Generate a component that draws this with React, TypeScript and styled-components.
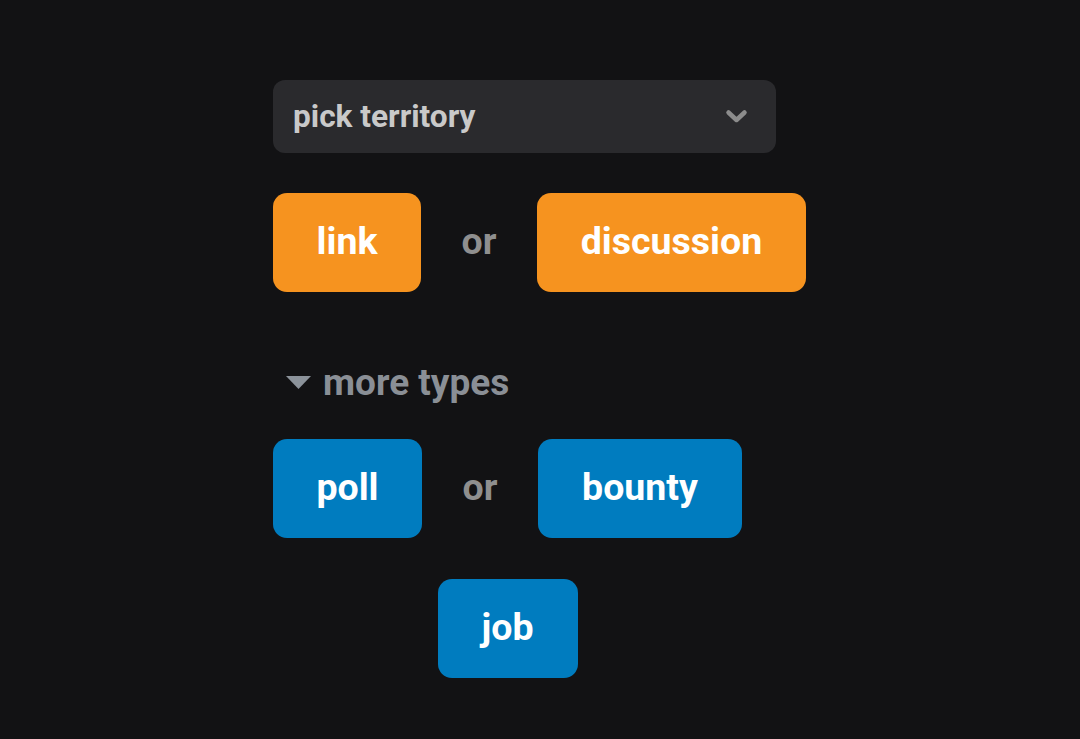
import React from "react";
import styled, { createGlobalStyle } from "styled-components";

const Global = createGlobalStyle`
  html, body { margin: 0; padding: 0; background: #121214; }
  body { font-family: Roboto, "Liberation Sans", sans-serif; }
`;

const Page = styled.div`
  width: 1080px;
  height: 739px;
  background: #121214;
  box-sizing: border-box;
  padding: 80px 0 0 273px;
  display: flex;
  flex-direction: column;
  align-items: flex-start;
`;

const Select = styled.div`
  width: 503px;
  height: 73px;
  box-sizing: border-box;
  border-radius: 12px;
  background: #2a2a2d;
  display: flex;
  align-items: center;
  justify-content: space-between;
  padding: 0 28px 0 20px;
  color: #c9c9c9;
  font-weight: 700;
  font-size: 31.6px;
`;

const Row = styled.div<{ $mt: number }>`
  display: flex;
  align-items: center;
  margin-top: ${(p) => p.$mt}px;
`;

const Btn = styled.div<{ $w: number; $color: string }>`
  width: ${(p) => p.$w}px;
  height: 99px;
  box-sizing: border-box;
  padding-bottom: 4px;
  border-radius: 14px;
  background: ${(p) => p.$color};
  color: #fff;
  font-weight: 700;
  font-size: 37.5px;
  display: flex;
  align-items: center;
  justify-content: center;
`;

const Or = styled.div`
  width: 116px;
  padding-bottom: 4px;
  text-align: center;
  color: #8f8f8f;
  font-weight: 700;
  font-size: 37.5px;
`;

const More = styled.div`
  display: flex;
  align-items: center;
  margin-top: 70px;
  margin-left: 13px;
  gap: 12px;
  color: #8a8f96;
  font-weight: 700;
  font-size: 37px;
  height: 40px;
`;

const Group = styled.div`
  display: flex;
  flex-direction: column;
  align-items: center;
  margin-top: 37px;
`;

const ORANGE = "#f6931f";
const BLUE = "#007cbf";

export default function App() {
  return (
    <>
      <Global />
      <Page>
        <Select>
          <span>pick territory</span>
          <svg width="23" height="15" viewBox="0 0 23 15">
            <path d="M3.5 3.5 L11.5 11 L19.5 3.5" fill="none" stroke="#8c8c8c" strokeWidth="4.5" strokeLinecap="round" strokeLinejoin="round" />
          </svg>
        </Select>
        <Row $mt={40}>
          <Btn $w={148} $color={ORANGE}>link</Btn>
          <Or>or</Or>
          <Btn $w={269} $color={ORANGE}>discussion</Btn>
        </Row>
        <More>
          <svg width="25" height="13" viewBox="0 0 25 13">
            <path d="M0 0 L25 0 L12.5 13 Z" fill="#8b929a" />
          </svg>
          <span>more types</span>
        </More>
        <Group>
          <Row $mt={0}>
            <Btn $w={149} $color={BLUE}>poll</Btn>
            <Or>or</Or>
            <Btn $w={204} $color={BLUE}>bounty</Btn>
          </Row>
          <Row $mt={41}>
            <Btn $w={140} $color={BLUE}>job</Btn>
          </Row>
        </Group>
      </Page>
    </>
  );
}
